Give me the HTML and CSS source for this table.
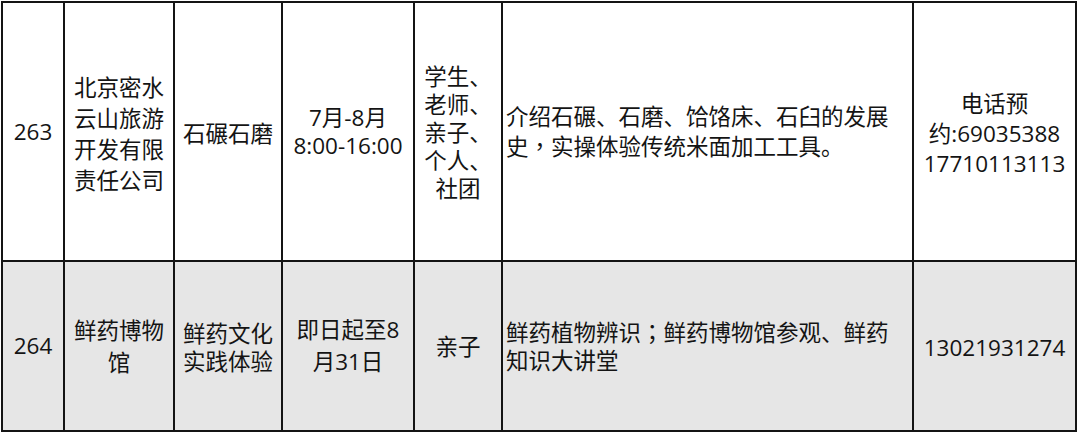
FILE: index.html
```html
<!DOCTYPE html>
<html lang="zh-CN">
<head>
<meta charset="utf-8">
<link rel="stylesheet" href="styles.css">
</head>
<body>
<table class="grid">
  <colgroup>
    <col class="c-no">
    <col class="c-org">
    <col class="c-name">
    <col class="c-time">
    <col class="c-who">
    <col class="c-desc">
    <col class="c-tel">
  </colgroup>
  <tbody>
    <tr class="row-a">
      <td class="no">263</td>
      <td class="org">北京密水<br>云山旅游<br>开发有限<br>责任公司</td>
      <td class="name">石碾石磨</td>
      <td class="time">7月-8月<br>8:00-16:00</td>
      <td class="who">学生、<br>老师、<br>亲子、<br>个人、<br>社团</td>
      <td class="desc">介绍石碾、石磨、饸饹床、石臼的发展<br>史<span class="punct" lang="zh-TW">，</span>实操体验传统米面加工工具。</td>
      <td class="tel">电话预<br>约:69035388<br>17710113113</td>
    </tr>
    <tr class="row-b">
      <td class="no">264</td>
      <td class="org org-b">鲜药博物<br>馆</td>
      <td class="name">鲜药文化<br>实践体验</td>
      <td class="time time-b">即日起至8<br>月31日</td>
      <td class="who">亲子</td>
      <td class="desc">鲜药植物辨识<span class="punct" lang="zh-TW">；</span>鲜药博物馆参观、鲜药<br>知识大讲堂</td>
      <td class="tel">13021931274</td>
    </tr>
  </tbody>
</table>
</body>
</html>
```

FILE: styles.css
```css
html, body {
  margin: 0;
  padding: 0;
  background: #ffffff;
}

body {
  padding: 1px 0 0 1px;
  font-family: "Open Sans", "Noto Sans CJK SC", sans-serif;
  font-size: 22.5px;
  color: #141414;
}

.grid {
  table-layout: fixed;
  border-collapse: collapse;
  width: 1076px;
}

.grid td {
  border: 2px solid #141414;
  text-align: center;
  vertical-align: middle;
  padding: 0;
  line-height: 28px;
  white-space: nowrap;
  overflow: hidden;
}

.c-no { width: 62px; }
.c-org { width: 110px; }
.c-name { width: 108px; }
.c-time { width: 132px; }
.c-who { width: 88px; }
.c-desc { width: 411px; }
.c-tel { width: 163px; }

.row-a { height: 259px; }
.row-b { height: 170px; background: #e6e6e6; }

.grid td.org { line-height: 31px; padding-top: 4px; }
.grid td.org-b { line-height: 32px; padding-top: 2px; }
.grid td.time-b { line-height: 32px; }
.grid td.who { padding-top: 2px; }
.grid td.tel { line-height: 30px; padding-top: 4px; }
.grid td.name { padding-top: 4px; }

.grid td.desc {
  text-align: left;
  padding-left: 3px;
}

.punct {
  font-family: "Noto Sans CJK TC", "Noto Sans CJK SC", sans-serif;
}
```
